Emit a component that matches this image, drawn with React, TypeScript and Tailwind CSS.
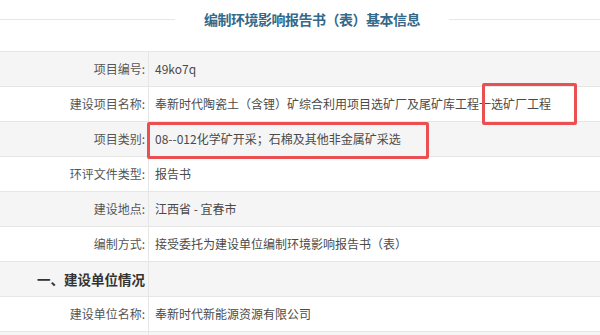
import React from "react";

type Row = { label: string; value?: string; section?: boolean };

const rows: Row[] = [
  { label: "项目编号:", value: "49ko7q" },
  { label: "建设项目名称:", value: "奉新时代陶瓷土（含锂）矿综合利用项目选矿厂及尾矿库工程一选矿厂工程" },
  { label: "项目类别:", value: "08--012化学矿开采；石棉及其他非金属矿采选" },
  { label: "环评文件类型:", value: "报告书" },
  { label: "建设地点:", value: "江西省 - 宜春市" },
  { label: "编制方式:", value: "接受委托为建设单位编制环境影响报告书（表）" },
  { label: "一、建设单位情况", section: true },
  { label: "建设单位名称:", value: "奉新时代新能源资源有限公司" },
  { label: "", value: "" },
];

export default function App() {
  return (
    <div
      className="relative w-[600px] h-[335px] overflow-hidden bg-white"
      style={{ fontFamily: '"Microsoft YaHei", "Noto Sans CJK SC", "Noto Sans", sans-serif' }}
    >
      <div className="h-[51px] pt-[9px]">
        <div className="flex items-center h-[20px]">
          <div className="w-[175px] h-px bg-[#dbeaf4]" />
          <div className="px-[29px] text-[14px] font-bold text-[#34698a] whitespace-nowrap tracking-[-0.5px]">
            编制环境影响报告书（表）基本信息
          </div>
          <div className="flex-1 h-px bg-[#dbeaf4]" />
        </div>
      </div>
      <div className="flex flex-col">
        {rows.map((r, i) => (
          <div
            key={i}
            className={`grid grid-cols-[149px_1fr] h-[35px] border-t border-[#e6e6e6] ${
              i % 2 === 0 ? "bg-[#f5f5f5]" : "bg-white"
            }`}
          >
            <div
              className={`flex items-center justify-end pr-[3px] border-r border-[#e6e6e6] whitespace-nowrap ${
                r.section ? "text-[13.5px] font-bold text-[#333]" : "text-[12px] text-[#555]"
              }`}
            >
              {r.label}
            </div>
            <div className="flex items-center pl-[6px] text-[12px] text-[#4a4a4a] whitespace-nowrap">
              {r.value}
            </div>
          </div>
        ))}
      </div>
      <div className="absolute left-[482px] top-[83px] w-[95px] h-[42px] border-[3px] border-[#ea4f52] rounded-[2px]" />
      <div className="absolute left-[147px] top-[122px] w-[282px] h-[37px] border-[3px] border-[#ea4f52] rounded-[2px]" />
    </div>
  );
}
